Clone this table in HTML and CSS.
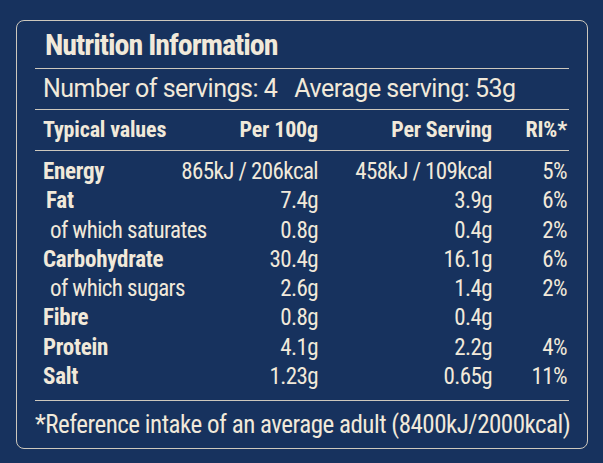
FILE: index.html
```html
<!DOCTYPE html>
<html lang="en">
<head>
<meta charset="utf-8">
<title>Nutrition Information</title>
<link rel="stylesheet" href="styles.css">
</head>
<body>
<div class="card">
  <div class="title">Nutrition Information</div>
  <div class="servings">Number of servings: 4&nbsp;&nbsp; Average serving: 53g</div>
  <div class="head grid">
    <span>Typical values</span>
    <span class="r">Per 100g</span>
    <span class="r">Per Serving</span>
    <span class="r">RI%*</span>
  </div>
  <div class="body">
    <div class="grid row"><span class="b">Energy</span><span class="r">865kJ / 206kcal</span><span class="r">458kJ / 109kcal</span><span class="r">5%</span></div>
    <div class="grid row"><span class="b fat">Fat</span><span class="r">7.4g</span><span class="r">3.9g</span><span class="r">6%</span></div>
    <div class="grid row"><span class="sub">of which saturates</span><span class="r">0.8g</span><span class="r">0.4g</span><span class="r">2%</span></div>
    <div class="grid row"><span class="b">Carbohydrate</span><span class="r">30.4g</span><span class="r">16.1g</span><span class="r">6%</span></div>
    <div class="grid row"><span class="sub">of which sugars</span><span class="r">2.6g</span><span class="r">1.4g</span><span class="r">2%</span></div>
    <div class="grid row"><span class="b">Fibre</span><span class="r">0.8g</span><span class="r">0.4g</span><span class="r"></span></div>
    <div class="grid row"><span class="b">Protein</span><span class="r">4.1g</span><span class="r">2.2g</span><span class="r">4%</span></div>
    <div class="grid row"><span class="b">Salt</span><span class="r">1.23g</span><span class="r">0.65g</span><span class="r">11%</span></div>
  </div>
  <div class="foot">*Reference intake of an average adult (8400kJ/2000kcal)</div>
</div>
</body>
</html>
```

FILE: styles.css
```css
html, body {
  margin: 0;
  padding: 0;
}
body {
  background: #17325e;
  width: 603px;
  height: 463px;
  overflow: hidden;
  font-family: Roboto, "Liberation Sans", sans-serif;
  color: #f1e9da;
}
.card {
  box-sizing: border-box;
  margin: 20px 0 0 16px;
  width: 572px;
  height: 429px;
  border: 1.5px solid #cdc8bd;
  border-radius: 8px;
  padding: 0 18px 0 18px;
  display: flex;
  flex-direction: column;
}
.title {
  height: 47px;
  line-height: 48px;
  padding-left: 10px;
  font-size: 30px;
  font-weight: 700;
  font-stretch: 75%;
  letter-spacing: -1px;
  border-bottom: 1.5px solid #cdc8bd;
}
.servings {
  height: 40px;
  line-height: 40px;
  padding-left: 8px;
  font-size: 25px;
  font-weight: 400;
  letter-spacing: -0.5px;
  border-bottom: 1.5px solid #cdc8bd;
}
.grid {
  display: grid;
  grid-template-columns: 130px 145px 174px 75px;
  padding: 0 2px 0 8px;
}
.r {
  text-align: right;
}
.head {
  height: 40px;
  line-height: 40px;
  font-size: 22px;
  font-weight: 700;
  font-stretch: 75%;
  letter-spacing: -0.15px;
  border-bottom: 1.5px solid #cdc8bd;
}
.body {
  padding: 6px 0 9px;
  border-bottom: 1.5px solid #cdc8bd;
}
.row {
  height: 29.3px;
  line-height: 29.3px;
  font-size: 23px;
  font-stretch: 75%;
  letter-spacing: -0.6px;
  white-space: nowrap;
}
.b {
  font-weight: 700;
  letter-spacing: -0.25px;
}
.fat {
  padding-left: 3px;
}
.sub {
  padding-left: 7px;
}
.foot {
  flex: 1;
  display: flex;
  align-items: center;
  font-size: 25px;
  font-stretch: 75%;
  letter-spacing: -0.5px;
  white-space: nowrap;
}
```
